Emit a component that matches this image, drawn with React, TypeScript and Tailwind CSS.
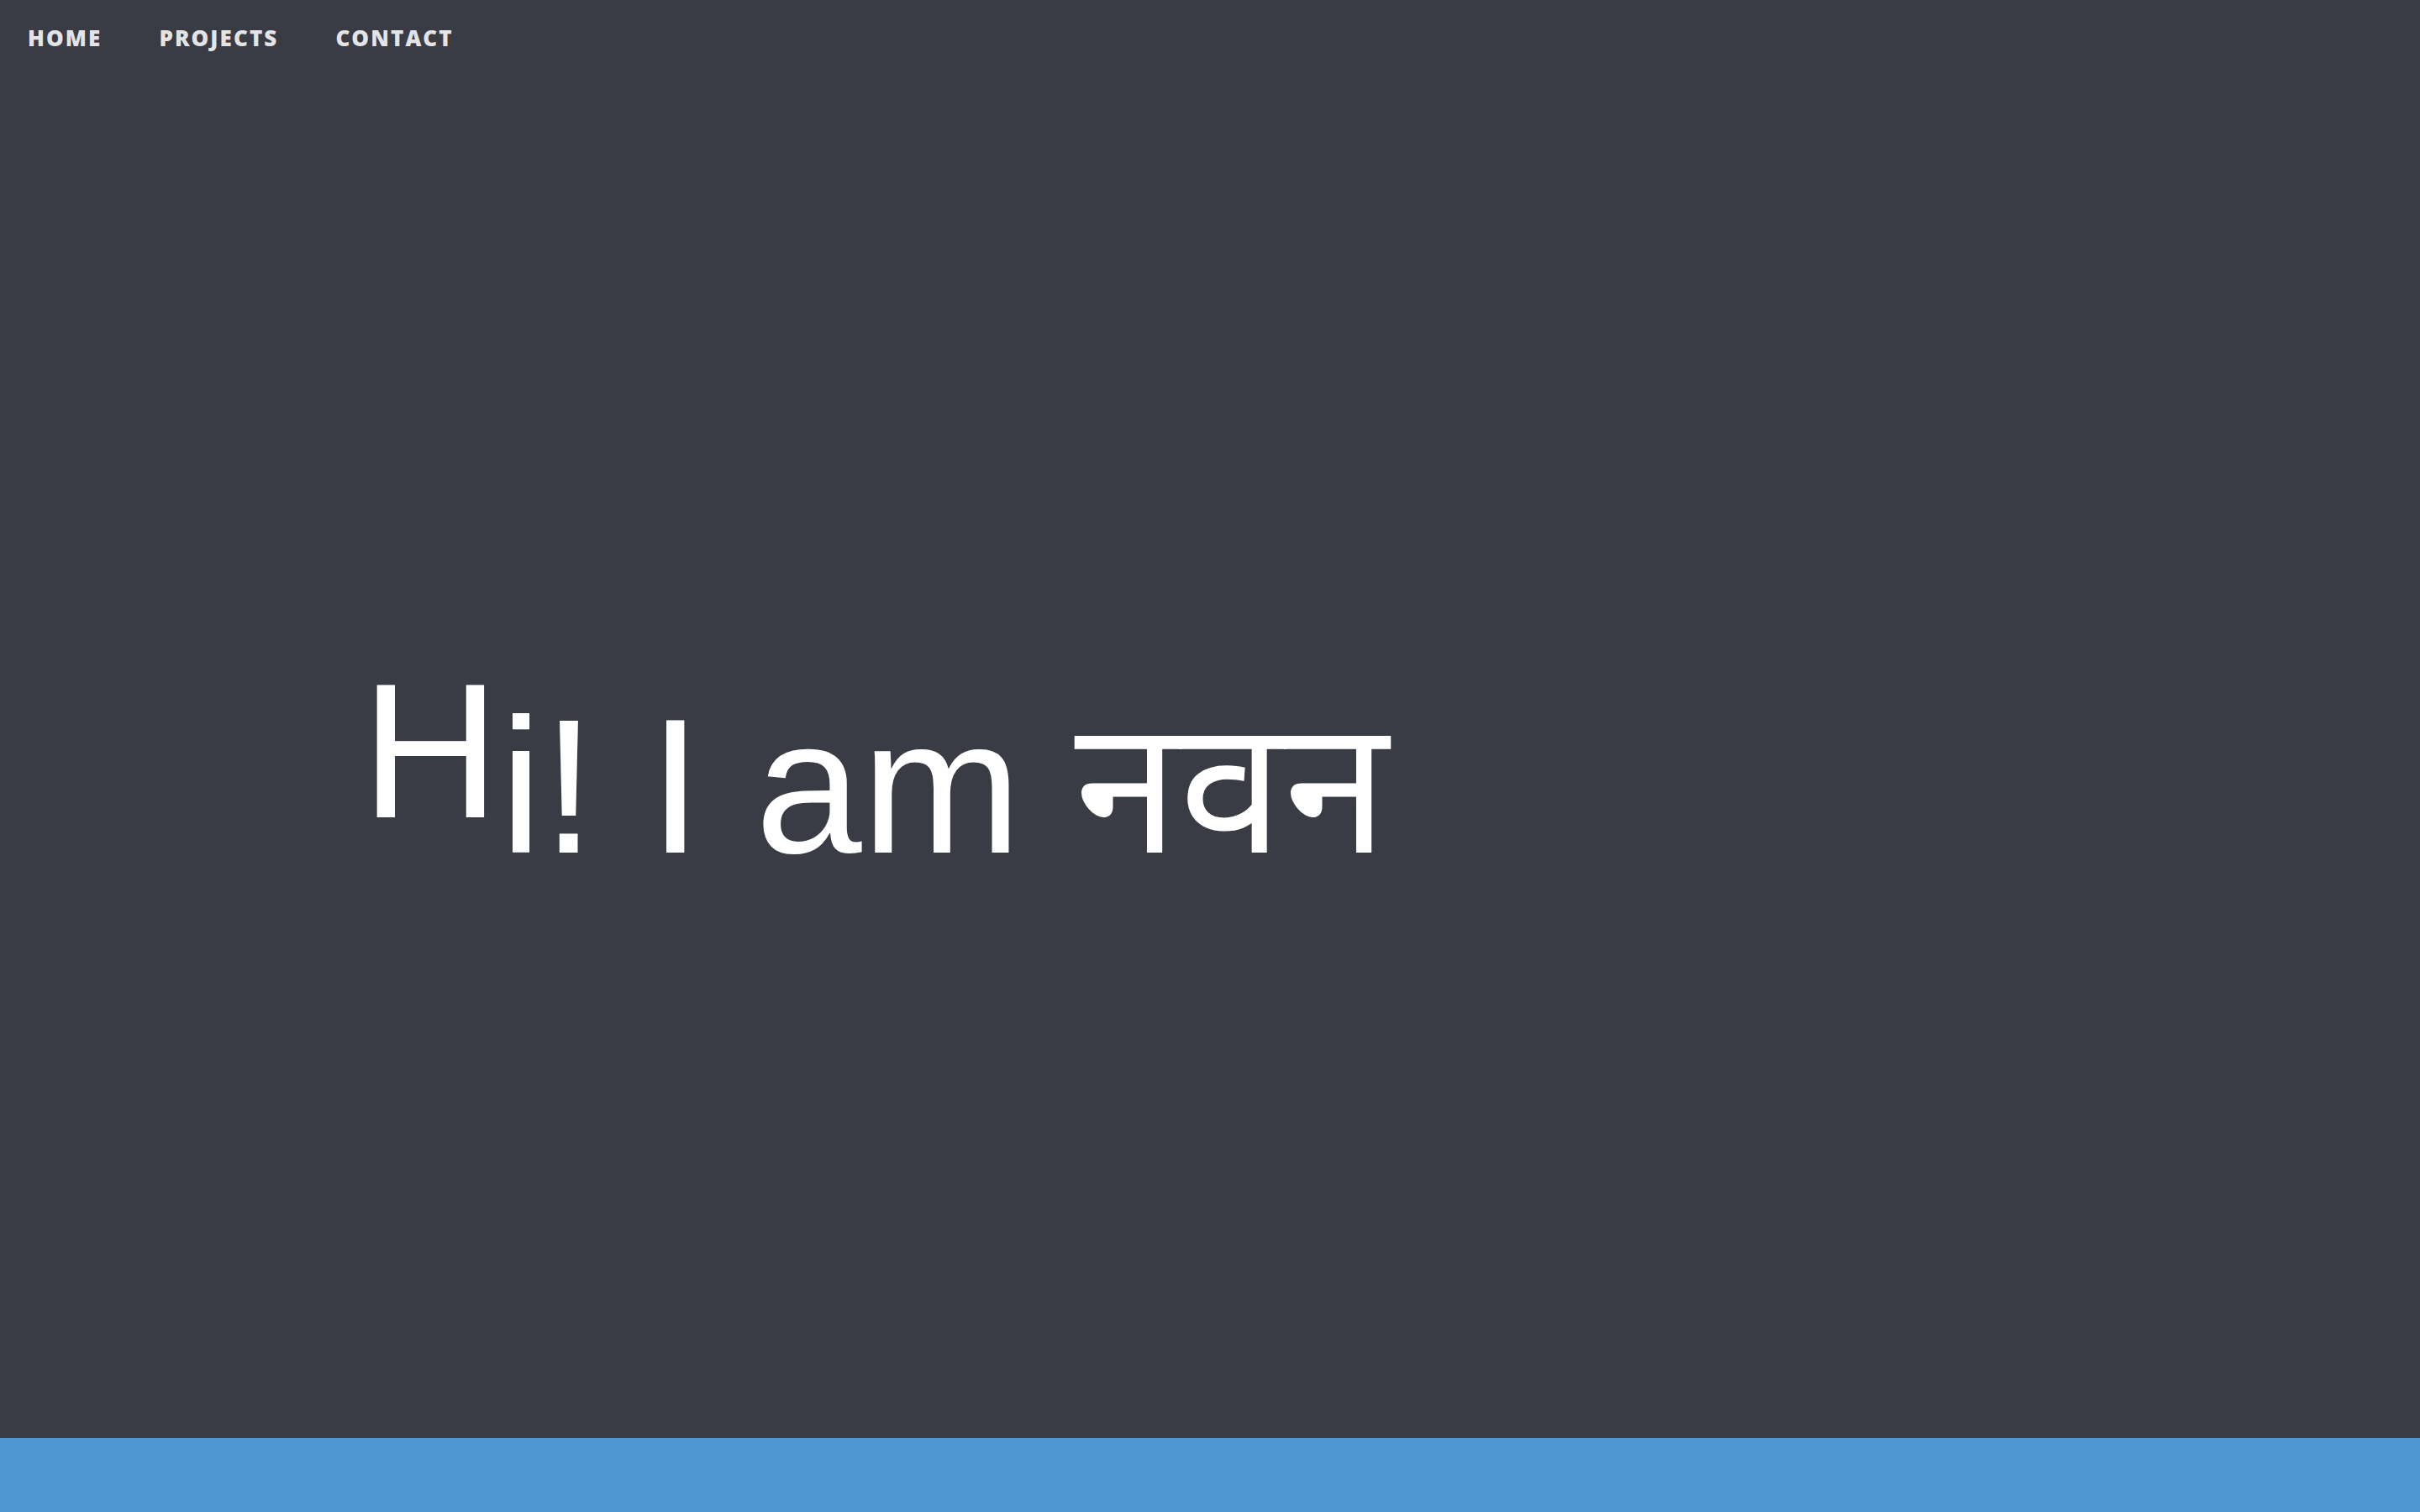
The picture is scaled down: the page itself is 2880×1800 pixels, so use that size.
import React from 'react';

const links = ['HOME', 'PROJECTS', 'CONTACT'];

const App: React.FC = () => {
  return (
    <div className="flex h-screen flex-col bg-[#393b45]">
      <nav className="flex items-center gap-[68px] px-[33px] pt-[28px]">
        {links.map((l) => (
          <a
            key={l}
            href="#"
            className="font-['Open_Sans',sans-serif] text-[26px] font-extrabold leading-[34px] tracking-[0.08em] text-[#e4e4e6]"
          >
            {l}
          </a>
        ))}
      </nav>

      <main className="flex flex-1 items-start pl-[430px] pt-[760px]">
        <h1 className="flex items-baseline whitespace-pre font-['Liberation_Sans','Noto_Sans','Noto_Sans_Devanagari',sans-serif] text-[228px] font-normal leading-none text-white">
          <span className="inline-block -translate-y-[42px]">H</span>
          <span>i! I am </span>
          <span className="text-[224px]">नवन</span>
        </h1>
      </main>

      <footer className="h-[88px] shrink-0 bg-[#4e97d4]" />
    </div>
  );
};

export default App;
